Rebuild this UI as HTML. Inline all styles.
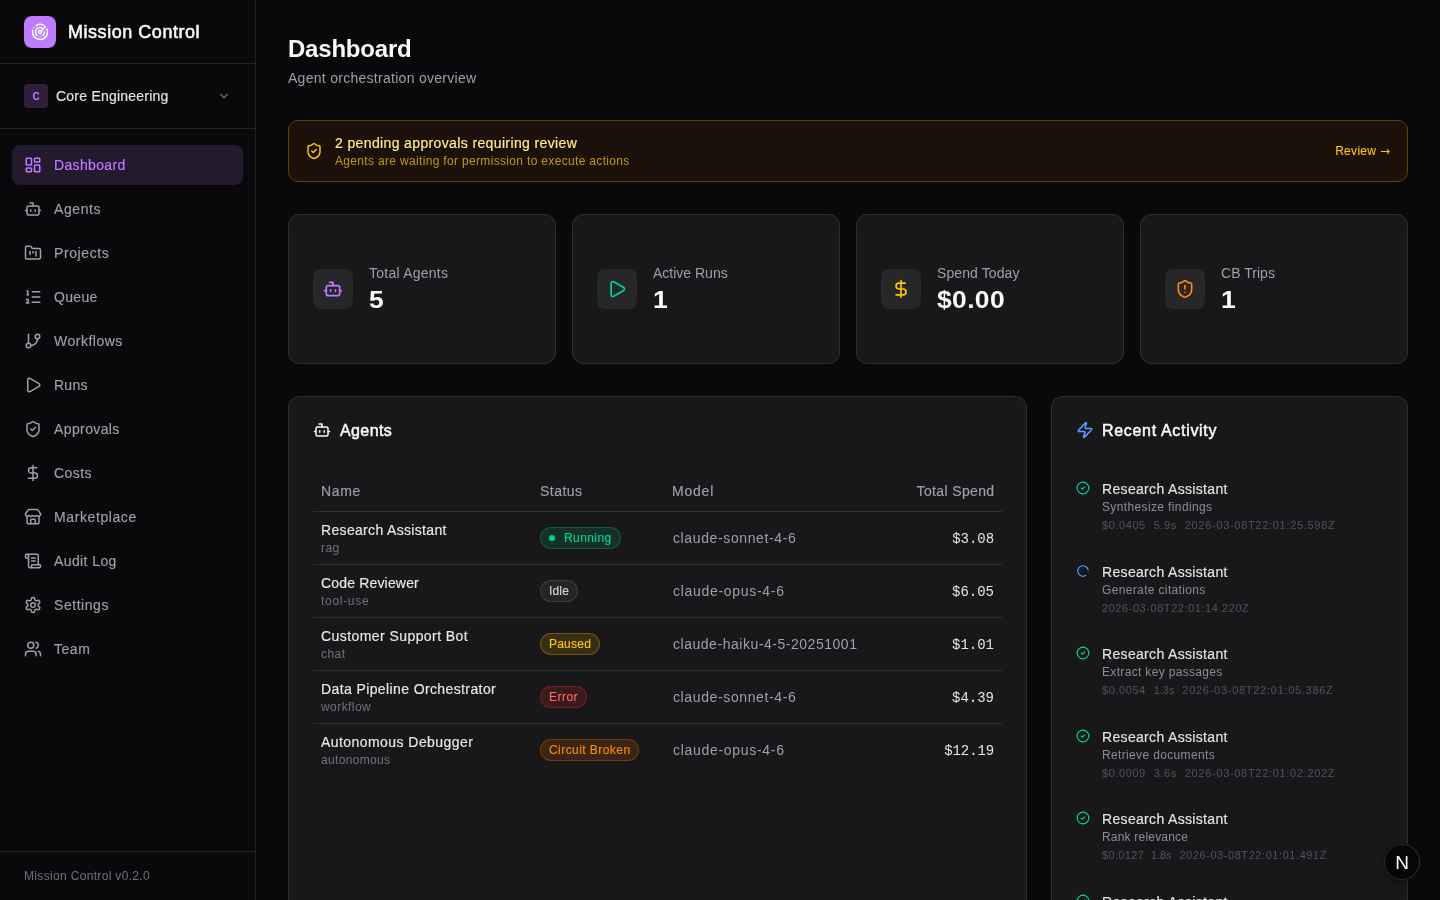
<!DOCTYPE html>
<html lang="en">
<head>
<meta charset="utf-8">
<title>Mission Control</title>
<style>
*{box-sizing:border-box;margin:0;padding:0}
html,body{width:1440px;height:900px;overflow:hidden;background:#09090b;color:#f4f4f5;
  font-family:"Liberation Sans",sans-serif;-webkit-font-smoothing:antialiased}
svg{display:block;fill:none;stroke:currentColor;stroke-width:2;stroke-linecap:round;stroke-linejoin:round}
.abs{position:absolute}
/* sidebar */
#side{position:absolute;left:0;top:0;width:256px;height:900px;border-right:1px solid rgba(255,255,255,.1);will-change:transform}
#brand{position:absolute;left:0;top:0;width:255px;height:64px;border-bottom:1px solid rgba(255,255,255,.1)}
#logo{position:absolute;left:24px;top:16px;width:32px;height:32px;border-radius:8px;background:#bd7cff;color:#fff}
#logo svg{position:absolute;left:7px;top:7px;width:18px;height:18px}
#brand .t{position:absolute;left:68px;top:18px;font-size:18px;line-height:28px;font-weight:400;-webkit-text-stroke:.55px #fafafa;color:#fafafa;white-space:nowrap}
#org{position:absolute;left:0;top:64px;width:255px;height:65px;border-bottom:1px solid rgba(255,255,255,.1)}
#org .c{position:absolute;left:24px;top:20px;width:24px;height:24px;border-radius:4px;background:#2e203c;color:#c27aff;
  font-size:10px;font-weight:700;line-height:26px;text-align:center}
#org .n{position:absolute;left:56px;top:22px;font-size:14px;line-height:20px;color:#e4e4e7;white-space:nowrap}
#org svg{position:absolute;left:217px;top:25px;width:14px;height:14px;color:#71717b}
.nav{position:absolute;left:12px;width:231px;height:40px;border-radius:8px;color:#9f9fa9;font-size:14px;line-height:20px}
.nav svg{position:absolute;left:12px;top:11px;width:18px;height:18px}
.nav span{position:absolute;left:42px;top:10px;white-space:nowrap}
.nav.on{background:#241a30;color:#c27aff}
#foot{position:absolute;left:0;top:851px;width:255px;height:49px;border-top:1px solid rgba(255,255,255,.1)}
#foot span{position:absolute;left:24px;top:16px;font-size:12px;line-height:16px;color:#71717b;white-space:nowrap}
/* main */
#main{position:absolute;left:256px;top:0;width:1184px;height:900px;overflow:hidden;will-change:transform}
h1{position:absolute;left:32px;top:33px;font-size:24px;line-height:32px;font-weight:700;color:#fafafa;letter-spacing:-0.3px;white-space:nowrap}
#sub{position:absolute;left:32px;top:68px;font-size:14px;line-height:20px;color:#9f9fa9;white-space:nowrap}

/* alert */
#alert{position:absolute;left:32px;top:120px;width:1120px;height:62px;border:1px solid #5c4208;border-radius:10px;background:#1c100b}
#alert svg{position:absolute;left:16px;top:21px;width:18px;height:18px;color:#fdc700}
#alert .a1{position:absolute;left:46px;top:12px;font-size:14px;line-height:20px;color:#fff085;white-space:nowrap}
#alert .a2{position:absolute;left:46px;top:32px;font-size:12px;line-height:16px;color:#c29a0a;white-space:nowrap}
#alert .rv{position:absolute;right:17px;top:22px;font-size:12px;line-height:16px;color:#fdc700;white-space:nowrap}
/* stats */
.stat{position:absolute;top:214px;width:268px;height:150px;border:1px solid rgba(255,255,255,.1);border-radius:12px;background:#18181b}
.stat .ib{position:absolute;left:24px;top:54px;width:40px;height:40px;border-radius:8px;background:#27272a}
.stat .ib svg{position:absolute;left:10px;top:10px;width:20px;height:20px}
.stat .l{position:absolute;left:80px;top:48px;font-size:14px;line-height:20px;color:#9f9fa9;white-space:nowrap}
.stat .v{position:absolute;left:80px;top:69px;transform:scaleX(1.1);transform-origin:0 50%;font-size:24px;line-height:32px;font-weight:700;color:#fafafa;white-space:nowrap}

/* panels */
.panel{position:absolute;top:396px;height:560px;border:1px solid rgba(255,255,255,.1);border-radius:12px;background:#18181b}
.panel .pt{position:absolute;top:24px;left:24px;height:18px}
.panel .pt svg{position:absolute;left:0;top:0;width:18px;height:18px}
.panel .pt span{position:absolute;left:26px;top:-2px;font-size:16px;line-height:24px;font-weight:700;color:#fafafa;white-space:nowrap}
#agents{left:32px;width:739px}
#act{left:795px;width:357px}
/* table : coordinates relative to panel (panel left=288 abs, top=396 abs) */
.th{position:absolute;top:84px;font-size:14px;line-height:20px;color:#9f9fa9;white-space:nowrap}
.hr{position:absolute;left:24px;width:689px;height:1px;background:rgba(255,255,255,.1)}
.row{position:absolute;left:24px;width:689px;height:52px}
.row .nm{position:absolute;left:8px;top:8px;font-size:14px;line-height:20px;color:#e8e8eb;white-space:nowrap}
.row .sb{position:absolute;left:8px;top:28px;font-size:12px;line-height:16px;color:#71717b;white-space:nowrap}
.row .md{position:absolute;left:360px;top:16px;font-size:14px;line-height:20px;color:#9f9fa9;white-space:nowrap}
.row .sp{position:absolute;right:8px;top:17px;font-size:14px;line-height:20px;color:#e4e4e7;white-space:nowrap;font-family:"Liberation Mono",monospace}
.bd{position:absolute;left:227px;top:15px;height:22px;border:1px solid;border-radius:11px;padding:2px 7.500px 2px 8px;font-size:12px;line-height:16px;white-space:nowrap}
.bd i{display:inline-block;width:6px;height:6px;border-radius:3px;background:#00d492;margin-right:9px;vertical-align:1px}
.b-run{padding-right:8.500px;letter-spacing:.42px;color:#00d492;background:rgba(0,188,125,.15);border-color:rgba(0,188,125,.3)}
.b-idle{color:#d4d4d8;background:rgba(113,113,123,.15);border-color:rgba(113,113,123,.3)}
.b-pause{color:#fdc700;background:rgba(240,177,0,.15);border-color:rgba(240,177,0,.3)}
.b-err{color:#ff6467;background:rgba(251,44,54,.15);border-color:rgba(251,44,54,.3)}
.b-cb{color:#ff8904;background:rgba(255,105,0,.15);border-color:rgba(255,105,0,.3)}
/* activity */
.it{position:absolute;left:24px;width:310px;height:56px}
.it svg{position:absolute;left:0;top:2px;width:14px;height:14px}
.it .n{letter-spacing:.33px;position:absolute;left:26px;top:0;font-size:14px;line-height:20px;color:#e4e4e7;white-space:nowrap}
.it .d{position:absolute;left:26px;top:20px;font-size:12px;line-height:16px;color:#8b8b94;white-space:nowrap}
.it .m{position:absolute;left:26px;top:38px;font-size:11px;line-height:16px;color:#52525c;white-space:nowrap}
.it .m span{margin-right:8px}
#nb{position:absolute;left:1128px;top:844px;width:36px;height:36px;border-radius:18px;background:#050505;border:1px solid #2b2b2e;box-shadow:0 0 0 1px #101012,0 6px 12px -4px rgba(0,0,0,.3)}
#nb svg{position:absolute;left:0;top:0;width:34px;height:34px;stroke:none}
.nav span,#org .n,#alert .a1,.row .nm,.it .n,.bd,.th{-webkit-text-stroke:.16px currentColor}
.panel .pt span{font-weight:400;-webkit-text-stroke:.5px currentColor}
#alert .rv{-webkit-text-stroke:.1px currentColor}
#alert .rv span{font-family:"DejaVu Sans",sans-serif;font-size:12px;letter-spacing:0;-webkit-text-stroke:0}
</style>
</head>
<body>
<div id="side">
  <div id="brand">
    <div id="logo"><svg viewBox="0 0 24 24"><path d="M19.07 4.93A10 10 0 0 0 6.99 3.34"/><path d="M4 6h.01"/><path d="M2.29 9.62A10 10 0 1 0 21.31 8.35"/><path d="M16.24 7.76A6 6 0 1 0 8.23 16.67"/><path d="M12 18h.01"/><path d="M17.99 11.66A6 6 0 0 1 15.77 16.67"/><circle cx="12" cy="12" r="2"/><path d="m13.41 10.59 5.66-5.66"/></svg></div>
    <div class="t" style="letter-spacing:0.54px">Mission Control</div>
  </div>
  <div id="org">
    <div class="c">C</div>
    <div class="n" style="letter-spacing:0.23px">Core Engineering</div>
    <svg viewBox="0 0 24 24"><path d="m6 9 6 6 6-6"/></svg>
  </div>
  <div class="nav on" style="top:145px"><svg viewBox="0 0 24 24"><rect width="7" height="9" x="3" y="3" rx="1"/><rect width="7" height="5" x="14" y="3" rx="1"/><rect width="7" height="9" x="14" y="12" rx="1"/><rect width="7" height="5" x="3" y="16" rx="1"/></svg><span style="letter-spacing:0.35px">Dashboard</span></div>
  <div class="nav" style="top:189px"><svg viewBox="0 0 24 24"><path d="M12 8V4H8"/><rect width="16" height="12" x="4" y="8" rx="2"/><path d="M2 14h2"/><path d="M20 14h2"/><path d="M15 13v2"/><path d="M9 13v2"/></svg><span style="letter-spacing:0.58px">Agents</span></div>
  <div class="nav" style="top:233px"><svg viewBox="0 0 24 24"><path d="M4 20h16a2 2 0 0 0 2-2V8a2 2 0 0 0-2-2h-7.930a2 2 0 0 1-1.660-.9l-.82-1.200A2 2 0 0 0 7.930 3H4a2 2 0 0 0-2 2v13c0 1.100.9 2 2 2Z"/><path d="M8 10v4"/><path d="M12 10v2"/><path d="M16 10v6"/></svg><span style="letter-spacing:0.59px">Projects</span></div>
  <div class="nav" style="top:277px"><svg viewBox="0 0 24 24"><path d="M11 5h10"/><path d="M11 12h10"/><path d="M11 19h10"/><path d="M4 4h1v5"/><path d="M4 9h2"/><path d="M6.500 20H3.400c0-1 2.600-1.925 2.600-3.500a1.500 1.500 0 0 0-2.600-1.020"/></svg><span style="letter-spacing:0.32px;">Queue</span></div>
  <div class="nav" style="top:321px"><svg viewBox="0 0 24 24"><line x1="6" x2="6" y1="3" y2="15"/><circle cx="18" cy="6" r="3"/><circle cx="6" cy="18" r="3"/><path d="M18 9a9 9 0 0 1-9 9"/></svg><span style="letter-spacing:0.5px;">Workflows</span></div>
  <div class="nav" style="top:365px"><svg viewBox="0 0 24 24"><path d="M5 5a2 2 0 0 1 3.008-1.728l11.997 6.998a2 2 0 0 1 .003 3.458l-12 7A2 2 0 0 1 5 19z"/></svg><span style="letter-spacing:0.26px;">Runs</span></div>
  <div class="nav" style="top:409px"><svg viewBox="0 0 24 24"><path d="M20 13c0 5-3.500 7.500-7.660 8.950a1 1 0 0 1-.67-.01C7.500 20.500 4 18 4 13V6a1 1 0 0 1 1-1c2 0 4.500-1.200 6.240-2.720a1.170 1.170 0 0 1 1.520 0C14.510 3.810 17 5 19 5a1 1 0 0 1 1 1z"/><path d="m9 12 2 2 4-4"/></svg><span style="letter-spacing:0.39px">Approvals</span></div>
  <div class="nav" style="top:453px"><svg viewBox="0 0 24 24"><line x1="12" x2="12" y1="2" y2="22"/><path d="M17 5H9.500a3.500 3.500 0 0 0 0 7h5a3.500 3.500 0 0 1 0 7H6"/></svg><span style="letter-spacing:0.41px;">Costs</span></div>
  <div class="nav" style="top:497px"><svg viewBox="0 0 24 24"><path d="M15 21v-5a1 1 0 0 0-1-1h-4a1 1 0 0 0-1 1v5"/><path d="M17.774 10.310a1.120 1.120 0 0 0-1.549 0 2.500 2.500 0 0 1-3.451 0 1.120 1.120 0 0 0-1.548 0 2.500 2.500 0 0 1-3.452 0 1.120 1.120 0 0 0-1.549 0 2.500 2.500 0 0 1-3.770-3.248l2.889-4.184A2 2 0 0 1 7 2h10a2 2 0 0 1 1.653.873l2.895 4.192a2.500 2.500 0 0 1-3.774 3.244"/><path d="M4 10.950V19a2 2 0 0 0 2 2h12a2 2 0 0 0 2-2v-8.050"/></svg><span style="letter-spacing:0.6px">Marketplace</span></div>
  <div class="nav" style="top:541px"><svg viewBox="0 0 24 24"><path d="M15 12h-5"/><path d="M15 8h-5"/><path d="M19 17V5a2 2 0 0 0-2-2H4"/><path d="M8 21h12a2 2 0 0 0 2-2v-1a1 1 0 0 0-1-1H11a1 1 0 0 0-1 1v1a2 2 0 1 1-4 0V5a2 2 0 1 0-4 0v2a1 1 0 0 0 1 1h3"/></svg><span style="letter-spacing:0.4px">Audit Log</span></div>
  <div class="nav" style="top:585px"><svg viewBox="0 0 24 24"><path d="M12.220 2h-.44a2 2 0 0 0-2 2v.18a2 2 0 0 1-1 1.730l-.43.25a2 2 0 0 1-2 0l-.15-.08a2 2 0 0 0-2.730.73l-.22.38a2 2 0 0 0 .73 2.730l.15.1a2 2 0 0 1 1 1.720v.51a2 2 0 0 1-1 1.740l-.15.09a2 2 0 0 0-.73 2.730l.22.38a2 2 0 0 0 2.730.73l.15-.08a2 2 0 0 1 2 0l.43.25a2 2 0 0 1 1 1.730V20a2 2 0 0 0 2 2h.44a2 2 0 0 0 2-2v-.18a2 2 0 0 1 1-1.730l.43-.25a2 2 0 0 1 2 0l.15.08a2 2 0 0 0 2.730-.73l.22-.39a2 2 0 0 0-.73-2.730l-.15-.08a2 2 0 0 1-1-1.740v-.5a2 2 0 0 1 1-1.740l.15-.09a2 2 0 0 0 .73-2.730l-.22-.38a2 2 0 0 0-2.730-.73l-.15.08a2 2 0 0 1-2 0l-.43-.25a2 2 0 0 1-1-1.730V4a2 2 0 0 0-2-2z"/><circle cx="12" cy="12" r="3"/></svg><span style="letter-spacing:0.55px;">Settings</span></div>
  <div class="nav" style="top:629px"><svg viewBox="0 0 24 24"><path d="M16 21v-2a4 4 0 0 0-4-4H6a4 4 0 0 0-4 4v2"/><circle cx="9" cy="7" r="4"/><path d="M22 21v-2a4 4 0 0 0-3-3.870"/><path d="M16 3.130a4 4 0 0 1 0 7.750"/></svg><span style="letter-spacing:0.53px;">Team</span></div>
  <div id="foot"><span style="letter-spacing:0.33px">Mission Control v0.2.0</span></div>
</div>
<div id="main">
  <h1 style="letter-spacing:-0.21px">Dashboard</h1>
  <div id="sub" style="letter-spacing:0.28px">Agent orchestration overview</div>
  <div id="alert"><svg viewBox="0 0 24 24"><path d="M20 13c0 5-3.500 7.500-7.660 8.950a1 1 0 0 1-.67-.01C7.500 20.500 4 18 4 13V6a1 1 0 0 1 1-1c2 0 4.500-1.200 6.240-2.720a1.170 1.170 0 0 1 1.520 0C14.510 3.810 17 5 19 5a1 1 0 0 1 1 1z"/><path d="m9 12 2 2 4-4"/></svg>
    <div class="a1" style="letter-spacing:0.37px">2 pending approvals requiring review</div>
    <div class="a2" style="letter-spacing:0.33px">Agents are waiting for permission to execute actions</div>
    <div class="rv" style="letter-spacing:0.3px">Review <span>→</span></div>
  </div>
  <div class="stat" style="left:32px"><div class="ib" style="color:#c27aff"><svg viewBox="0 0 24 24"><path d="M12 8V4H8"/><rect width="16" height="12" x="4" y="8" rx="2"/><path d="M2 14h2"/><path d="M20 14h2"/><path d="M15 13v2"/><path d="M9 13v2"/></svg></div><div class="l" style="letter-spacing:0.24px;">Total Agents</div><div class="v">5</div></div>
  <div class="stat" style="left:316px"><div class="ib" style="color:#00d492"><svg viewBox="0 0 24 24"><path d="M5 5a2 2 0 0 1 3.008-1.728l11.997 6.998a2 2 0 0 1 .003 3.458l-12 7A2 2 0 0 1 5 19z"/></svg></div><div class="l">Active Runs</div><div class="v">1</div></div>
  <div class="stat" style="left:600px"><div class="ib" style="color:#fdc700"><svg viewBox="0 0 24 24"><line x1="12" x2="12" y1="2" y2="22"/><path d="M17 5H9.500a3.500 3.500 0 0 0 0 7h5a3.500 3.500 0 0 1 0 7H6"/></svg></div><div class="l" style="letter-spacing:0.1px">Spend Today</div><div class="v" style="letter-spacing:0.35px">$0.00</div></div>
  <div class="stat" style="left:884px"><div class="ib" style="color:#ff8904"><svg viewBox="0 0 24 24"><path d="M20 13c0 5-3.500 7.500-7.660 8.950a1 1 0 0 1-.67-.01C7.500 20.500 4 18 4 13V6a1 1 0 0 1 1-1c2 0 4.500-1.200 6.240-2.720a1.170 1.170 0 0 1 1.520 0C14.510 3.810 17 5 19 5a1 1 0 0 1 1 1z"/><path d="M12 8v4"/><path d="M12 16h.01"/></svg></div><div class="l" style="letter-spacing:0.03px;">CB Trips</div><div class="v">1</div></div>
  <div class="panel" id="agents">
    <div class="pt" style="color:#fafafa"><svg viewBox="0 0 24 24"><path d="M12 8V4H8"/><rect width="16" height="12" x="4" y="8" rx="2"/><path d="M2 14h2"/><path d="M20 14h2"/><path d="M15 13v2"/><path d="M9 13v2"/></svg><span style="letter-spacing:0.4px;left:27px">Agents</span></div>
    <div class="th" style="letter-spacing:0.67px;left:32px">Name</div><div class="th" style="letter-spacing:0.48px;left:251px">Status</div><div class="th" style="letter-spacing:0.78px;left:383px">Model</div><div class="th" style="letter-spacing:0.36px;right:31.500px">Total Spend</div>
    <div class="hr" style="top:114px"></div>
    <div class="row" style="top:115px"><div class="nm" style="letter-spacing:0.33px">Research Assistant</div><div class="sb" style="letter-spacing:0.4px;">rag</div><div class="bd b-run"><i></i>Running</div><div class="md" style="letter-spacing:0.62px">claude-sonnet-4-6</div><div class="sp" style="letter-spacing:-0.05px;">$3.08</div></div>
    <div class="hr" style="top:167px"></div>
    <div class="row" style="top:168px"><div class="nm" style="letter-spacing:0.17px">Code Reviewer</div><div class="sb" style="letter-spacing:0.7px">tool-use</div><div class="bd b-idle" style="letter-spacing:0.17px">Idle</div><div class="md" style="letter-spacing:0.7px">claude-opus-4-6</div><div class="sp">$6.05</div></div>
    <div class="hr" style="top:220px"></div>
    <div class="row" style="top:221px"><div class="nm" style="letter-spacing:0.43px">Customer Support Bot</div><div class="sb" style="letter-spacing:0.47px;">chat</div><div class="bd b-pause" style="letter-spacing:0.22px">Paused</div><div class="md" style="letter-spacing:0.53px">claude-haiku-4-5-20251001</div><div class="sp">$1.01</div></div>
    <div class="hr" style="top:273px"></div>
    <div class="row" style="top:274px"><div class="nm" style="letter-spacing:0.39px">Data Pipeline Orchestrator</div><div class="sb" style="letter-spacing:0.44px">workflow</div><div class="bd b-err" style="letter-spacing:0.47px">Error</div><div class="md" style="letter-spacing:0.62px">claude-sonnet-4-6</div><div class="sp">$4.39</div></div>
    <div class="hr" style="top:326px"></div>
    <div class="row" style="top:327px"><div class="nm" style="letter-spacing:0.44px">Autonomous Debugger</div><div class="sb" style="letter-spacing:0.34px">autonomous</div><div class="bd b-cb" style="letter-spacing:0.44px">Circuit Broken</div><div class="md" style="letter-spacing:0.7px">claude-opus-4-6</div><div class="sp" style="letter-spacing:-0.12px;">$12.19</div></div>
  </div>
  <div class="panel" id="act">
    <div class="pt" style="color:#51a2ff"><svg viewBox="0 0 24 24"><path d="M4 14a1 1 0 0 1-.78-1.630l9.900-10.200a.5.5 0 0 1 .86.46l-1.920 6.020A1 1 0 0 0 13 10h7a1 1 0 0 1 .78 1.630l-9.900 10.200a.5.5 0 0 1-.86-.46l1.920-6.020A1 1 0 0 0 11 14z"/></svg><span style="letter-spacing:0.68px;">Recent Activity</span></div>
    <div class="it" style="top:82px"><svg viewBox="0 0 24 24" style="color:#00d492"><circle cx="12" cy="12" r="10"/><path d="m9 12 2 2 4-4"/></svg><div class="n">Research Assistant</div><div class="d" style="letter-spacing:0.37px">Synthesize findings</div><div class="m"><span style="letter-spacing:0.57px">$0.0405</span><span style="letter-spacing:0.53px">5.9s</span><span style="letter-spacing:0.7px">2026-03-08T22:01:25.598Z</span></div></div>
    <div class="it" style="top:165px"><svg viewBox="0 0 24 24" style="color:#51a2ff;transform:rotate(60deg)"><path d="M21 12a9 9 0 1 1-6.219-8.560"/></svg><div class="n">Research Assistant</div><div class="d" style="letter-spacing:0.35px">Generate citations</div><div class="m"><span style="letter-spacing:0.56px">2026-03-08T22:01:14.220Z</span></div></div>
    <div class="it" style="top:247px"><svg viewBox="0 0 24 24" style="color:#00d492"><circle cx="12" cy="12" r="10"/><path d="m9 12 2 2 4-4"/></svg><div class="n">Research Assistant</div><div class="d" style="letter-spacing:0.33px">Extract key passages</div><div class="m"><span style="letter-spacing:0.58px">$0.0054</span><span style="letter-spacing:-0.07px">1.3s</span><span style="letter-spacing:0.72px">2026-03-08T22:01:05.386Z</span></div></div>
    <div class="it" style="top:330px"><svg viewBox="0 0 24 24" style="color:#00d492"><circle cx="12" cy="12" r="10"/><path d="m9 12 2 2 4-4"/></svg><div class="n">Research Assistant</div><div class="d" style="letter-spacing:0.35px">Retrieve documents</div><div class="m"><span style="letter-spacing:0.58px">$0.0009</span><span style="letter-spacing:0.53px">3.6s</span><span style="letter-spacing:0.69px">2026-03-08T22:01:02.202Z</span></div></div>
    <div class="it" style="top:412px"><svg viewBox="0 0 24 24" style="color:#00d492"><circle cx="12" cy="12" r="10"/><path d="m9 12 2 2 4-4"/></svg><div class="n">Research Assistant</div><div class="d" style="letter-spacing:0.2px;">Rank relevance</div><div class="m"><span style="letter-spacing:0.36px;margin-right:6.600px">$0.0127</span><span style="letter-spacing:-0.07px">1.8s</span><span style="letter-spacing:0.57px">2026-03-08T22:01:01.491Z</span></div></div>
    <div class="it" style="top:495px"><svg viewBox="0 0 24 24" style="color:#00d492"><circle cx="12" cy="12" r="10"/><path d="m9 12 2 2 4-4"/></svg><div class="n">Research Assistant</div></div>
  </div>
  <div id="nb"><svg viewBox="0 0 34 34"><text x="17" y="23.500" text-anchor="middle" font-family="Liberation Sans, sans-serif" font-size="19" fill="#ffffff">N</text></svg></div>
</div>
</body>
</html>
